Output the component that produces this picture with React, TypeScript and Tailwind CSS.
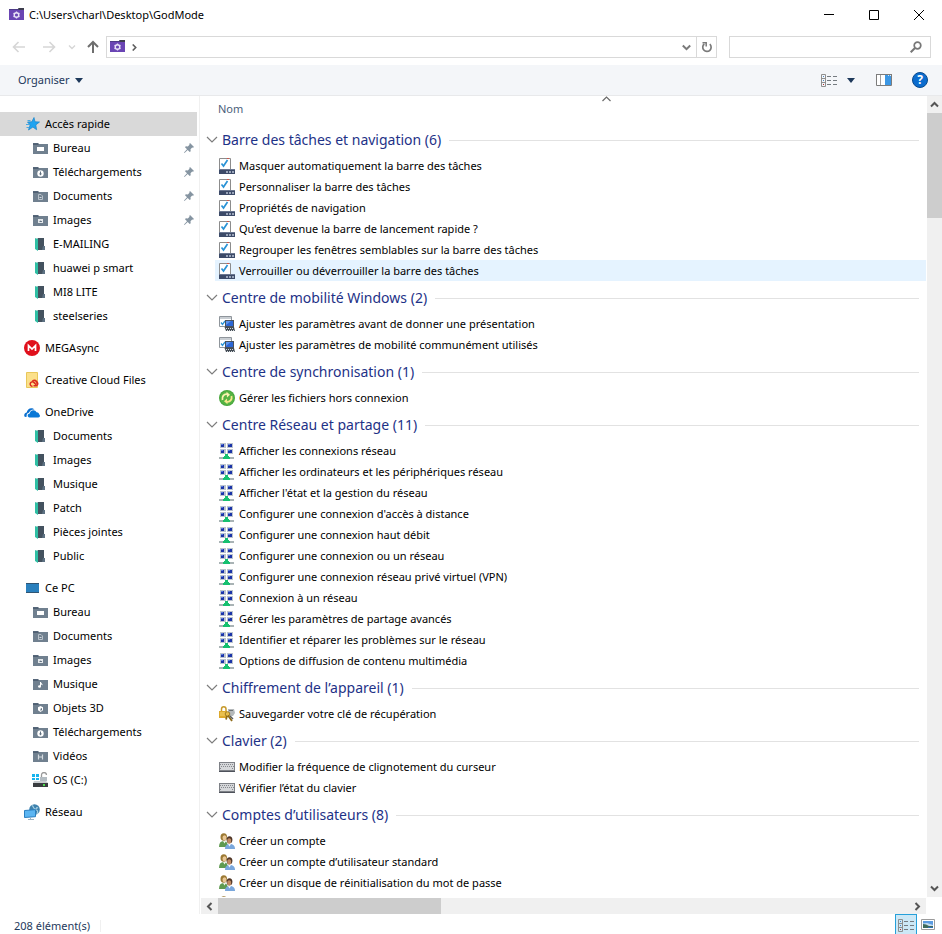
import type { ReactNode } from "react";

type IconProps = { className?: string };

function Svg({ size = 16, children, className = "" }: { size?: number; children: ReactNode; className?: string }) {
  return (
    <svg width={size} height={size} viewBox={`0 0 ${size} ${size}`} className={`shrink-0 ${className}`} fill="none" aria-hidden="true">
      {children}
    </svg>
  );
}

/* ---------- Window and toolbar icons ---------- */

function GodModeIcon({ className }: IconProps) {
  return (
    <Svg className={className}>
      <path d="M0 2h15v11H0z" fill="#6a45b4" />
      <path d="M0 2h10l1 1H0z" fill="#4d3a86" />
      <path d="M9 1h6v2h-5z" fill="#3d3d4d" />
      <circle cx="7.500" cy="8" r="2.300" stroke="#e9e3f7" strokeWidth="1.400" />
      <path d="M7.500 4.500v1M7.500 10.500v1M4.500 6.300l.9.500M9.600 9.200l.9.500M4.500 9.700l.9-.5M9.600 6.800l.9-.5" stroke="#e9e3f7" strokeWidth="1.300" />
    </Svg>
  );
}

function ListViewIcon() {
  return (
    <svg width="17" height="13" viewBox="0 0 17 13" fill="none" className="shrink-0" aria-hidden="true">
      <path d="M.5.5h4v12h-4zM.5 4.500h4M.5 8.500h4" stroke="#8f8f8f" />
      <path d="M2 2h1v1H2zM2 6h1v1H2z" fill="#4b86c2" />
      <path d="M2 10h1v1H2z" fill="#b03030" />
      <path d="M6 2.500h4M12 2.500h4M6 6.500h4M12 6.500h4M6 10.500h4M12 10.500h4" stroke="#757b80" />
    </svg>
  );
}

function PreviewPaneIcon() {
  return (
    <svg width="16" height="12" viewBox="0 0 16 12" fill="none" className="shrink-0" aria-hidden="true">
      <path d="M.5.5h15v11H.5z" fill="#fff" stroke="#7c7c7c" />
      <path d="M0 0h16v1H0z" fill="#7c7c7c" />
      <path d="M4.500 1v10" stroke="#a0a0a0" />
      <path d="M9 1h6v10H9z" fill="#3c97e4" />
      <path d="M12 1h1v1h-1zM14 1h1v1h-1z" fill="#dcecf9" />
    </svg>
  );
}

function HelpIcon() {
  return (
    <span className="flex size-4 items-center justify-center rounded-full border border-[#0a4a8c] bg-[#0b6cce] text-[12px] leading-none font-bold text-white">
      ?
    </span>
  );
}

function Caret() {
  return (
    <svg width="8" height="5" viewBox="0 0 8 5" className="shrink-0" aria-hidden="true">
      <path d="M0 0h8L4 5z" fill="#1e395b" />
    </svg>
  );
}

function ScrollChevron({ d }: { d: string }) {
  return (
    <svg width="9" height="9" viewBox="0 0 9 9" fill="none" aria-hidden="true">
      <path d={d} stroke="#555" strokeWidth="2" />
    </svg>
  );
}

/* ---------- Navigation pane icons ---------- */

function StarIcon() {
  return (
    <Svg>
      <path d="M10 1.500l1 4.300 4.500.2-3.700 2.900.8 4.800-3.700-2.600L4.500 14l1.600-5L3.500 6l4.300-.2z" fill="#1fa3f0" stroke="#1784cc" strokeWidth=".7" />
      <path d="M3.500 4.500h3M2 8.500h3M2.500 11.500h2.500" stroke="#4aa9e0" />
    </Svg>
  );
}

const folderGlyphs: Record<string, ReactNode> = {
  desktop: <path d="M5 7h7v4H5z" fill="#fff" />,
  download: (
    <>
      <circle cx="8.500" cy="9.500" r="3.200" fill="#fff" />
      <path d="M8 7.500h1v2h1l-1.500 2L7 9.500h1z" fill="#5f7080" />
    </>
  ),
  document: (
    <>
      <path d="M6.500 6.500h2.500l1.500 1.500v3.500h-4z" stroke="#b9c2ca" />
      <path d="M7.500 9.500h2" stroke="#d5dbe0" />
    </>
  ),
  picture: (
    <>
      <path d="M6 7h5v4H6z" fill="#e4e8eb" />
      <path d="M7 10l1.500-1.500 1 .8.500-.3v1z" fill="#5f7080" />
    </>
  ),
  music: <path d="M8 6h1c0 1.500 2 1.500 1.500 3.500C10 8.500 9 8.500 9 8.500V10.500a1.500 1.300 0 1 1-1-1.200z" fill="#fff" />,
  cube: (
    <>
      <path d="M8.500 6L11 7.300v3L8.500 12 6 10.300v-3z" fill="#fff" />
      <path d="M8.500 8.800V11l1.500-1V8z" fill="#5f7080" />
    </>
  ),
  video: <path d="M6.500 6.500v5M10.500 6.500v5M6.500 9h4" stroke="#d5dbe0" strokeWidth="1.200" />,
};

function SystemFolderIcon({ glyph }: { glyph: string }) {
  return (
    <Svg>
      <path d="M1 3h5l1 1h8v2H1z" fill="#4c5d6c" />
      <path d="M1 5h5l1-1h9v10H1z" fill="#70808f" />
      <path d="M1 3h5v1.500H1z" fill="#56677a" />
      {folderGlyphs[glyph]}
    </Svg>
  );
}

function OpenFolderIcon() {
  return (
    <Svg>
      <path d="M5 2h7v8h1v4H5z" fill="#44525f" />
      <path d="M11 10h2v4h-3z" fill="#5d7182" />
      <path d="M3 2l3 1v12l-3-2z" fill="#2fbfa4" />
      <path d="M3 2h3v1z" fill="#a8d8cf" />
    </Svg>
  );
}

function MegaIcon() {
  return (
    <Svg>
      <circle cx="8" cy="8" r="8" fill="#e0101c" />
      <path d="M4.500 11V5.500L8 9l3.500-3.500V11" stroke="#fff" strokeWidth="1.700" />
    </Svg>
  );
}

function CreativeCloudIcon() {
  return (
    <Svg>
      <path d="M2.500.5h11v15h-11z" fill="#fbe08a" stroke="#e8c75a" />
      <path d="M8.500 14.200a2.200 2.200 0 1 1 .8-4.200l2.900 2.700" stroke="#dc2b1e" strokeWidth="1.500" />
      <path d="M8.300 9.300a3.100 3.100 0 1 1 4.300 4.500H9.500" stroke="#dc2b1e" strokeWidth="1.500" />
      <path d="M10 10.700a1.400 1.400 0 1 1 1.800 1.800" stroke="#dc2b1e" />
    </Svg>
  );
}

function OneDriveIcon() {
  return (
    <Svg>
      <path d="M.5 12.500C-.5 10 1.500 8.500 2.700 8.500 3 5 7.500 2.500 10.500 5.500 7.500 5 5.500 7 5 8.800c-2.200.2-2.700 2.200-2.200 4C1.500 13 .8 13 .5 12.500z" fill="#0a6fcf" />
      <path d="M5.500 13.500c-2.500-.3-2.500-3.800.3-4 .2-3.700 5.500-4.500 6.700-1.200 2 0 2.500 1.200 2.500 2 1.500.5 1.200 3.200-.7 3.200z" fill="#0a78d6" />
    </Svg>
  );
}

function PcIcon() {
  return (
    <Svg>
      <path d="M2 3h13v10H2z" fill="#2a80bd" />
      <path d="M2 12h13v1H2zM2 3h13v1H2z" fill="#2f5573" />
    </Svg>
  );
}

function DriveIcon() {
  return (
    <Svg>
      <path d="M0 2h3v3H0zM4 2h3v3H4zM0 6h3v2H0zM4 6h3v2H4z" fill="#17b4ee" />
      <path d="M9.500 5V3a2.500 2.500 0 0 1 5 0" stroke="#9a9a9a" strokeWidth="1.300" />
      <path d="M8 5h7v4H8z" fill="#b3bcc2" />
      <path d="M2 9h12l2 2H1z" fill="#c9cdd0" />
      <path d="M1 11h15v4H1z" fill="#3a3d40" />
      <path d="M11 12h2v2h-2z" fill="#4fdc4f" />
    </Svg>
  );
}

function NetworkPlaceIcon() {
  return (
    <Svg>
      <circle cx="10.500" cy="5.500" r="5.300" fill="#3f82ad" />
      <path d="M8 1.500c2 1 1 3 3 3.500s1-2.500 3-1M12 6c2 0 2 2 1 4" stroke="#a5cfe3" strokeWidth="1.200" />
      <path d="M.5 6.500l11-.8v7l-11 .8z" fill="#5bb5f2" stroke="#2a7fc0" />
      <path d="M4 15.500h6M6.500 13.500v2" stroke="#9bb4c4" />
    </Svg>
  );
}

function PinIcon() {
  return (
    <svg width="10" height="10" viewBox="0 0 10 10" className="shrink-0" aria-hidden="true">
      <path d="M6 0l4 4-1 .7-.8-.2-1.700 1.700.2 2-1 .8-2-2L.5 10 0 9.500 3 6.300l-2-2 .8-1 2 .2L5.500 1.800 5.300 1z" fill="#8594a1" />
    </svg>
  );
}

/* ---------- Task icons ---------- */

function TaskbarIcon() {
  return (
    <Svg>
      <path d="M.5.5h11v12H.5z" fill="#fff" stroke="#8c8c8c" />
      <path d="M8 0h2v1H8z" fill="#d0564a" />
      <path d="M2.500 5.500l2 2.500L8.500 2" stroke="#2b93d6" strokeWidth="1.700" />
      <path d="M0 11h16v5H0z" fill="#3c4a68" />
      <path d="M0 11h16v1H0z" fill="#6a7690" />
      <path d="M7 13h2v2H7zM10 13h2v2h-2zM13 13h2v2h-2z" fill="#9aa5ba" />
    </Svg>
  );
}

function MobilityIcon() {
  return (
    <Svg>
      <path d="M.5.5h12v10H.5z" fill="#fff" stroke="#8f959b" />
      <path d="M1 1h11v2H1z" fill="#c9ced3" />
      <path d="M2 6.500l1.500 2L6 5" stroke="#2b93d6" strokeWidth="1.300" />
      <path d="M6 4h9v7H6z" fill="#4a525c" />
      <path d="M7 5h7v5H7z" fill="#2b66d4" />
      <path d="M7 5h5l-5 4z" fill="#5c95ee" />
      <path d="M5.500 11h9.500l1 4H7z" fill="#444c55" />
      <path d="M7 12.500h8M8 14.500h7" stroke="#d3d8dc" strokeDasharray="1 1" />
    </Svg>
  );
}

function SyncIcon() {
  return (
    <Svg>
      <circle cx="8" cy="8" r="8" fill="#48a63c" />
      <circle cx="8" cy="8" r="7" fill="#55b343" />
      <path d="M3.500 10C2.700 6.500 5 3.800 8 4.200" stroke="#fdf3b0" strokeWidth="1.800" />
      <path d="M7.500 1.800L11 4.800 8 7.500z" fill="#fdf3b0" />
      <path d="M12.500 6c.8 3.500-1.500 6.200-4.500 5.800" stroke="#f7e88c" strokeWidth="1.800" />
      <path d="M8.500 14.200L5 11.200 8 8.500z" fill="#f7e88c" />
    </Svg>
  );
}

function NetworkIcon() {
  return (
    <Svg>
      <path d="M1 0h6v5H1zM8 0h6v5H8zM1 6h6v5H1zM8 6h6v5H8z" fill="#bcc4ce" />
      <path d="M2 1h3v3H2zM9 1h4v3H9zM2 7h3v3H2zM9 7h4v3H9z" fill="#1b34a8" />
      <path d="M2 1h2v1H2zM9 1h2v1H9zM2 7h2v1H2zM9 7h2v1H9z" fill="#5c7be0" />
      <path d="M0 14h15v2H0z" fill="#a9b3b5" />
      <path d="M6 11h3v2h1v1h1v2H4v-2h1v-1h1z" fill="#16c070" />
    </Svg>
  );
}

function EncryptionIcon() {
  return (
    <Svg>
      <path d="M2.500 5V3a2 2 0 0 1 4.500 0v3" stroke="#c79a2c" strokeWidth="1.500" />
      <path d="M0 5h8v7H0z" fill="#dda92c" />
      <path d="M1 7h6M1 9h6" stroke="#f6d671" />
      <path d="M9 3h6l1 4-2 3H9z" fill="#b5b9bb" />
      <path d="M10 4.500h4" stroke="#6d7275" />
      <circle cx="8.500" cy="8" r="2.300" fill="#e7bd4a" stroke="#8e6a17" strokeWidth=".8" />
      <path d="M9 9.500l4 5.500M8 10l-1 3.500" stroke="#8e6a17" strokeWidth="1.800" />
      <path d="M11 10l3 3" stroke="#5c5c5c" strokeWidth="1.500" />
    </Svg>
  );
}

function KeyboardIcon() {
  return (
    <Svg>
      <path d="M0 3h16v10H0z" fill="#7e8187" />
      <path d="M1 4h14v7H1z" fill="#d5d7da" />
      <path d="M1 5.500h14M2 7.500h13M1 9.500h2M13 9.500h2" stroke="#85888d" strokeDasharray="1 1" />
      <path d="M0 12h16v1H0z" fill="#4e525b" />
    </Svg>
  );
}

function UsersIcon() {
  return (
    <Svg>
      <path d="M0 14c0-4 1.500-6 4.500-6s4.500 2 4.500 6z" fill="#5f9a50" />
      <ellipse cx="4.800" cy="4" rx="3.300" ry="3.800" fill="#9c7a34" />
      <ellipse cx="5.500" cy="4.800" rx="2" ry="2.500" fill="#e9c795" />
      <path d="M4 8h3l-1.500 2.500z" fill="#eef3e8" />
      <path d="M6 16c0-3.500 1.500-5 4.800-5s5.200 1.500 5.200 5z" fill="#79a7dc" />
      <ellipse cx="10.500" cy="6.800" rx="2.900" ry="3.500" fill="#4f3526" />
      <ellipse cx="10.200" cy="8" rx="2" ry="2.800" fill="#c08a62" />
      <path d="M9 11h3l-1.500 2.500z" fill="#f2f6fb" />
    </Svg>
  );
}

/* ---------- Data ---------- */

type Place = { label: string; icon: ReactNode; pinned?: boolean };
type PlaceGroup = Place & { selected?: boolean; children?: Place[] };

const sys = (glyph: string) => <SystemFolderIcon glyph={glyph} />;
const folder = <OpenFolderIcon />;

const places: PlaceGroup[] = [
  {
    label: "Accès rapide",
    icon: <StarIcon />,
    selected: true,
    children: [
      { label: "Bureau", icon: sys("desktop"), pinned: true },
      { label: "Téléchargements", icon: sys("download"), pinned: true },
      { label: "Documents", icon: sys("document"), pinned: true },
      { label: "Images", icon: sys("picture"), pinned: true },
      { label: "E-MAILING", icon: folder },
      { label: "huawei p smart", icon: folder },
      { label: "MI8 LITE", icon: folder },
      { label: "steelseries", icon: folder },
    ],
  },
  { label: "MEGAsync", icon: <MegaIcon /> },
  { label: "Creative Cloud Files", icon: <CreativeCloudIcon /> },
  {
    label: "OneDrive",
    icon: <OneDriveIcon />,
    children: ["Documents", "Images", "Musique", "Patch", "Pièces jointes", "Public"].map((label) => ({ label, icon: folder })),
  },
  {
    label: "Ce PC",
    icon: <PcIcon />,
    children: [
      { label: "Bureau", icon: sys("desktop") },
      { label: "Documents", icon: sys("document") },
      { label: "Images", icon: sys("picture") },
      { label: "Musique", icon: sys("music") },
      { label: "Objets 3D", icon: sys("cube") },
      { label: "Téléchargements", icon: sys("download") },
      { label: "Vidéos", icon: sys("video") },
      { label: "OS (C:)", icon: <DriveIcon /> },
    ],
  },
  { label: "Réseau", icon: <NetworkPlaceIcon /> },
];

type TaskGroup = { title: string; count: number; icon: ReactNode; tasks: string[] };

const taskGroups: TaskGroup[] = [
  {
    title: "Barre des tâches et navigation",
    count: 6,
    icon: <TaskbarIcon />,
    tasks: [
      "Masquer automatiquement la barre des tâches",
      "Personnaliser la barre des tâches",
      "Propriétés de navigation",
      "Qu’est devenue la barre de lancement rapide ?",
      "Regrouper les fenêtres semblables sur la barre des tâches",
      "Verrouiller ou déverrouiller la barre des tâches",
    ],
  },
  {
    title: "Centre de mobilité Windows",
    count: 2,
    icon: <MobilityIcon />,
    tasks: ["Ajuster les paramètres avant de donner une présentation", "Ajuster les paramètres de mobilité communément utilisés"],
  },
  { title: "Centre de synchronisation", count: 1, icon: <SyncIcon />, tasks: ["Gérer les fichiers hors connexion"] },
  {
    title: "Centre Réseau et partage",
    count: 11,
    icon: <NetworkIcon />,
    tasks: [
      "Afficher les connexions réseau",
      "Afficher les ordinateurs et les périphériques réseau",
      "Afficher l'état et la gestion du réseau",
      "Configurer une connexion d'accès à distance",
      "Configurer une connexion haut débit",
      "Configurer une connexion ou un réseau",
      "Configurer une connexion réseau privé virtuel (VPN)",
      "Connexion à un réseau",
      "Gérer les paramètres de partage avancés",
      "Identifier et réparer les problèmes sur le réseau",
      "Options de diffusion de contenu multimédia",
    ],
  },
  { title: "Chiffrement de l’appareil", count: 1, icon: <EncryptionIcon />, tasks: ["Sauvegarder votre clé de récupération"] },
  {
    title: "Clavier",
    count: 2,
    icon: <KeyboardIcon />,
    tasks: ["Modifier la fréquence de clignotement du curseur", "Vérifier l’état du clavier"],
  },
  {
    title: "Comptes d’utilisateurs",
    count: 8,
    icon: <UsersIcon />,
    tasks: [
      "Créer un compte",
      "Créer un compte d’utilisateur standard",
      "Créer un disque de réinitialisation du mot de passe",
    ],
  },
];

const hoveredTask = "Verrouiller ou déverrouiller la barre des tâches";

/* ---------- Window parts ---------- */

function TitleBar() {
  return (
    <header className="flex h-[30px] shrink-0 items-center pr-px pl-[9px]">
      <GodModeIcon />
      <h1 className="ml-1 flex-1 truncate">C:\Users\charl\Desktop\GodMode</h1>
      <button aria-label="Réduire" className="flex h-full w-[45px] items-center justify-center">
        <Svg size={10}><path d="M0 4.500h10" stroke="#000" /></Svg>
      </button>
      <button aria-label="Agrandir" className="flex h-full w-[45px] items-center justify-center">
        <Svg size={10}><path d="M.5.5h9v9h-9z" stroke="#000" /></Svg>
      </button>
      <button aria-label="Fermer" className="flex h-full w-[45px] items-center justify-center">
        <Svg size={10}><path d="M0 0l10 10M10 0L0 10" stroke="#000" /></Svg>
      </button>
    </header>
  );
}

function AddressBar() {
  return (
    <div className="flex h-[35px] shrink-0 items-center pr-[11px] pb-px pl-3">
      <button aria-label="Précédent" className="mr-4">
        <Svg size={14}><path d="M1.500 7H13M6.500 2l-5 5 5 5" stroke="#d6d6d6" strokeWidth="1.600" /></Svg>
      </button>
      <button aria-label="Suivant" className="mr-3">
        <Svg size={14}><path d="M12.500 7H1M7.500 2l5 5-5 5" stroke="#d6d6d6" strokeWidth="1.600" /></Svg>
      </button>
      <button aria-label="Emplacements récents" className="mr-2.5">
        <Svg size={8}><path d="M1 2.500l3 3 3-3" stroke="#d6d6d6" strokeWidth="1.400" /></Svg>
      </button>
      <button aria-label="Dossier parent" className="mr-1.5">
        <Svg size={14}><path d="M7 13V2M2 7l5-5 5 5" stroke="#6e6e6e" strokeWidth="2" /></Svg>
      </button>
      <div className="flex h-[22px] min-w-0 flex-1 items-stretch border border-[#d9d9d9]">
        <button aria-label="GodMode" className="flex flex-1 items-center gap-1.5 pl-[3px]">
          <GodModeIcon />
          <Svg size={7}><path d="M.7.5l3 3-3 3" stroke="#5e5e5e" strokeWidth="1.600" /></Svg>
        </button>
        <button aria-label="Afficher l’historique" className="flex w-[19px] items-center justify-center">
          <Svg size={9}><path d="M.8 2.500l3.700 3.700 3.700-3.700" stroke="#7a7a7a" strokeWidth="2" /></Svg>
        </button>
        <button aria-label="Actualiser" className="flex w-5 items-center justify-center border-l border-[#d9d9d9]">
          <Svg size={12}>
            <path d="M3.300 3A4.200 4.200 0 1 0 8.800 3.200" stroke="#7a7a7a" strokeWidth="1.700" />
            <path d="M1.500 1.800h3.700v3.700" stroke="#7a7a7a" strokeWidth="1.500" />
          </Svg>
        </button>
      </div>
      <div className="ml-3 flex h-[22px] w-[202px] items-center border border-[#d9d9d9] pr-2">
        <input type="search" aria-label="Rechercher dans GodMode" className="h-full min-w-0 flex-1 px-1 outline-none" />
        <button aria-label="Rechercher">
          <Svg size={12}>
            <circle cx="7.500" cy="4.500" r="3.300" stroke="#777" strokeWidth="1.700" />
            <path d="M5 7l-4.300 4.300" stroke="#777" strokeWidth="2" />
          </Svg>
        </button>
      </div>
    </div>
  );
}

function Toolbar() {
  return (
    <div className="flex h-[31px] shrink-0 items-center border-b border-[#e8e9eb] bg-[#f4f6f9] pr-3.5 pl-[18px] text-[#1e395b]">
      <button className="flex items-center gap-[5px]">
        Organiser
        <Caret />
      </button>
      <div className="ml-auto flex items-center">
        <button aria-label="Affichage"><ListViewIcon /></button>
        <button aria-label="Autres options d’affichage" className="mr-px ml-[9px]"><Caret /></button>
        <button aria-label="Volet de visualisation" className="ml-5"><PreviewPaneIcon /></button>
        <button aria-label="Aide" className="ml-5"><HelpIcon /></button>
      </div>
    </div>
  );
}

function NavigationPane() {
  return (
    <nav aria-label="Emplacements" className="w-[200px] shrink-0 overflow-hidden border-r border-[#f0f0f0] pt-4 pr-0.5">
      <ul className="flex flex-col gap-2">
        {places.map((group) => (
          <li key={group.label}>
            <a href="#" className={`flex h-6 items-center gap-[5px] pl-6 ${group.selected ? "bg-[#d9d9d9]" : ""}`}>
              {group.icon}
              {group.label}
            </a>
            {group.children && (
              <ul>
                {group.children.map((place) => (
                  <li key={place.label}>
                    <a href="#" className="flex h-6 items-center gap-[5px] pr-[3px] pl-8">
                      {place.icon}
                      <span className="flex-1">{place.label}</span>
                      {place.pinned && <PinIcon />}
                    </a>
                  </li>
                ))}
              </ul>
            )}
          </li>
        ))}
      </ul>
    </nav>
  );
}

function TaskSection({ group }: { group: TaskGroup }) {
  return (
    <section>
      <h2 className="pt-0.5">
        <button className="flex h-[30px] w-full items-center pr-[7px] pl-[5px] text-[14px] leading-5 text-[#1e3287]">
          <svg width="12" height="8" viewBox="0 0 12 8" fill="none" className="mr-1 shrink-0" aria-hidden="true">
            <path d="M1 1l5 5 5-5" stroke="#7d7d7d" strokeWidth="1.200" />
          </svg>
          <span>{group.title} ({group.count})</span>
          <span className="ml-2 h-px flex-1 bg-[#e2e2e2]" />
        </button>
      </h2>
      <ul>
        {group.tasks.map((task) => (
          <li key={task} className="pl-3.5">
            <button className={`flex h-[21px] w-full items-center gap-1 pl-1 whitespace-nowrap ${task === hoveredTask ? "bg-[#e5f3ff]" : ""}`}>
              {group.icon}
              {task}
            </button>
          </li>
        ))}
        {group.tasks.length < group.count && (
          <li className="flex h-[21px] items-center pl-[18px]">{group.icon}</li>
        )}
      </ul>
    </section>
  );
}

function FileList() {
  return (
    <main className="grid min-w-0 flex-1 grid-cols-[minmax(0,1fr)_15px] grid-rows-[minmax(0,1fr)_16px] gap-px pl-px">
      <div className="overflow-hidden">
        <div className="relative">
          <button className="flex h-[27px] w-full items-center pb-0.5 pl-[17px] text-[#4c607a]">Nom</button>
          <svg width="9" height="6" viewBox="0 0 9 6" fill="none" className="absolute top-0 left-[401px]" aria-hidden="true">
            <path d="M.5 5l4-4 4 4" stroke="#6a6a6a" strokeWidth="1.200" />
          </svg>
        </div>
        {taskGroups.map((group) => (
          <TaskSection key={group.title} group={group} />
        ))}
      </div>
      <div className="flex flex-col bg-[#f0f0f0]">
        <button aria-label="Défiler vers le haut" className="flex h-[17px] items-center justify-center">
          <ScrollChevron d="M1 6.500L4.500 3 8 6.500" />
        </button>
        <div className="h-[105px] bg-[#cdcdcd]" />
        <button aria-label="Défiler vers le bas" className="mt-auto flex h-[17px] items-center justify-center">
          <ScrollChevron d="M1 2.500L4.500 6 8 2.500" />
        </button>
      </div>
      <div className="flex bg-[#f0f0f0]">
        <button aria-label="Défiler vers la gauche" className="flex w-[17px] items-center justify-center">
          <ScrollChevron d="M6.500 1L3 4.500 6.500 8" />
        </button>
        <div className="w-[223px] bg-[#cdcdcd]" />
        <button aria-label="Défiler vers la droite" className="ml-auto flex w-[17px] items-center justify-center">
          <ScrollChevron d="M2.500 1L6 4.500 2.500 8" />
        </button>
      </div>
    </main>
  );
}

function StatusBar() {
  return (
    <footer className="flex h-5 shrink-0 items-stretch overflow-hidden pr-[7px] pl-3.5 text-[#1e395b]">
      <p className="flex items-center pt-1 pr-2.5">208 élément(s)</p>
      <span className="mt-1.5 h-3 w-px bg-[#f0f0f0]" />
      <button aria-label="Détails" className="ml-auto flex h-[23px] w-[22px] items-center justify-center border border-[#26a0da] bg-[#cce8f6]">
        <ListViewIcon />
      </button>
      <button aria-label="Grandes icônes" className="ml-1 flex h-[21px] items-center">
        <svg width="14" height="11" viewBox="0 0 14 11" fill="none" aria-hidden="true">
          <path d="M.5.5h13v10H.5z" fill="#fff" stroke="#9b9b9b" />
          <path d="M2 2h10v7H2z" fill="#5b9be0" />
          <path d="M2 4.500l4-.5 6 2v1H2z" fill="#c5dcef" />
          <path d="M2 5l3 .5 3 1.500h4v2H2z" fill="#3e6a5c" />
          <path d="M7 8h5v1H7z" fill="#2f6fb8" />
        </svg>
      </button>
    </footer>
  );
}

export default function App() {
  return (
    <div className="flex h-screen flex-col overflow-hidden bg-white font-['Noto_Sans','Open_Sans',sans-serif] text-[11px] leading-4 text-black">
      <TitleBar />
      <AddressBar />
      <Toolbar />
      <div className="flex min-h-0 flex-1">
        <NavigationPane />
        <FileList />
      </div>
      <StatusBar />
    </div>
  );
}
